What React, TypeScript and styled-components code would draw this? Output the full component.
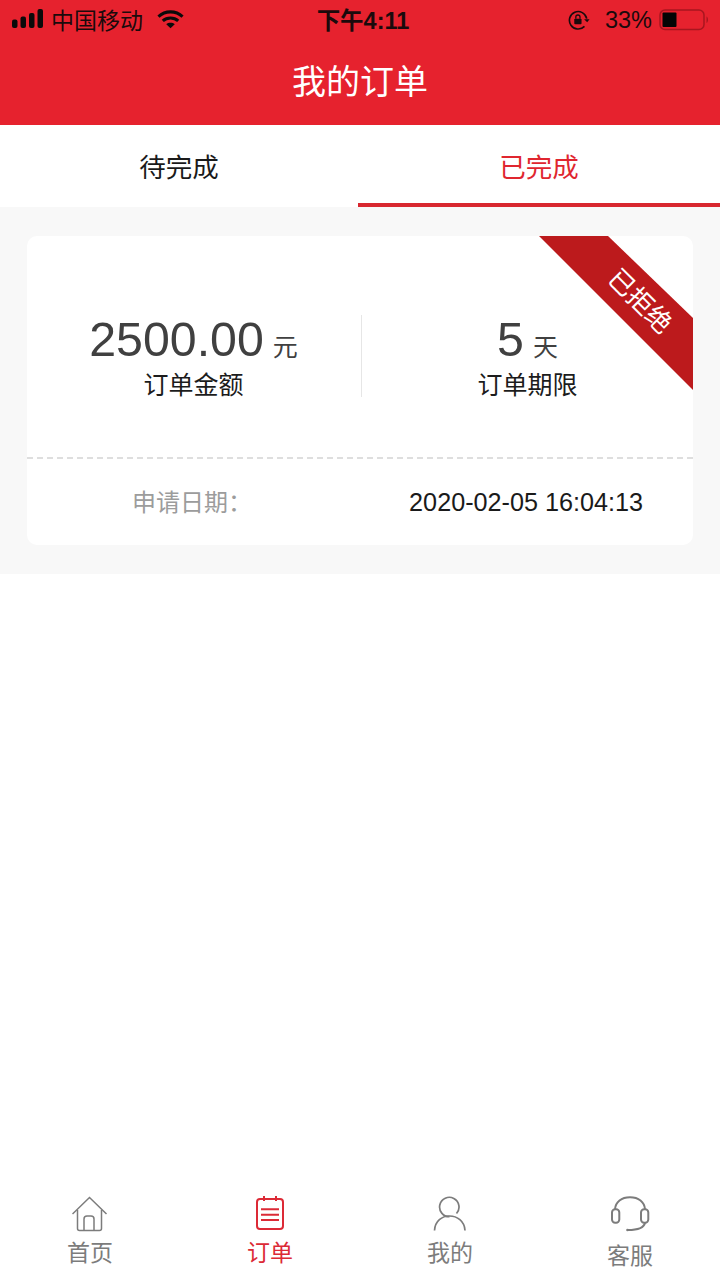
import React from "react";
import styled, { createGlobalStyle } from "styled-components";

const Global = createGlobalStyle`
  html, body { margin: 0; padding: 0; background: #fff; }
  body { font-family: "Liberation Sans", "Noto Sans CJK SC", sans-serif; }
  * { box-sizing: border-box; }
`;

const Page = styled.div`
  width: 720px; height: 1280px; display: flex; flex-direction: column; background: #fff; overflow: hidden;
`;
const Header = styled.header`
  height: 125px; background: #e6222e; display: flex; flex-direction: column; flex: none;
`;
const StatusBar = styled.div`
  height: 40px; display: grid; grid-template-columns: 1fr auto 1fr; align-items: center; padding: 0 11px 0 12px; color: #1a0a0c;
`;
const StatusLeft = styled.div`display: flex; align-items: center; gap: 8px; font-size: 23px; padding-bottom: 2px; svg:last-child { margin-left: 6px; }`;
const StatusTime = styled.div`font-size: 23.5px; font-weight: 700; margin-left: 5px; padding-bottom: 3px;`;
const StatusRight = styled.div`display: flex; align-items: center; justify-content: flex-end; gap: 7px; font-size: 23.5px; svg:first-child { margin-right: 8px; }`;
const Title = styled.h1`
  margin: 0; flex: 1; display: flex; align-items: center; justify-content: center; color: #fff;
  font-size: 34px; font-weight: 400; padding-bottom: 6px;
`;
const Tabs = styled.nav`height: 82px; display: grid; grid-template-columns: 358px 362px; background: #fff; flex: none;`;
const Tab = styled.div<{ $active?: boolean }>`
  display: flex; align-items: center; justify-content: center; font-size: 26.500px; padding-top: 3px;
  color: ${p => (p.$active ? "#e0262f" : "#1a1a1a")};
  border-bottom: 4px solid ${p => (p.$active ? "#d8272f" : "transparent")};
`;
const Content = styled.main`background: #f8f8f8; height: 367px; padding: 29px 27px; flex: none;`;
const Card = styled.section`
  position: relative; height: 309px; background: #fff; border-radius: 10px; overflow: hidden; display: flex; flex-direction: column;
`;
const Ribbon = styled.div`
  position: absolute; top: 0; right: 0; width: 154px; height: 154px; background: #bc1a1c;
  clip-path: polygon(0 0, 69px 0, 154px 82px, 154px 154px);
  display: flex; align-items: center; justify-content: center;
`;
const RibbonText = styled.span`
  color: #fff; font-size: 26px; transform: translate(26px, -14px) rotate(45deg); white-space: nowrap;
`;
const Stats = styled.div`
  height: 223px; display: grid; grid-template-columns: 334px 332px; align-content: center; padding-top: 18px;
  border-bottom: 2px dashed #dedede;
`;
const Stat = styled.div`
  height: 82px; display: flex; flex-direction: column; align-items: center; justify-content: flex-end;
  &:first-child { padding-right: 1px; }
  & + & { border-left: 1px solid #e6e6e6; }
`;
const Value = styled.div`color: #404040; font-size: 48.300px; line-height: 48px; white-space: nowrap;`;
const Unit = styled.span`font-size: 25px; margin-left: 9px;`;
const Label = styled.div`color: #1c1c1c; font-size: 25px; line-height: 30px; margin: -1px 0 -3px;`;
const DateRow = styled.div`flex: 1; display: flex; align-items: center; justify-content: space-between; padding: 0 50px 0 105px;`;
const DateLabel = styled.span`color: #9c9c9c; font-size: 24px; margin-top: -3px;`;
const DateValue = styled.span`color: #1a1a1a; font-size: 25.200px;`;
const Spacer = styled.div`flex: 1;`;
const TabBar = styled.footer`height: 108px; display: grid; grid-template-columns: repeat(4, 1fr); flex: none; background: #fff;`;
const BarItem = styled.div<{ $active?: boolean; $drop?: number }>`
  display: flex; flex-direction: column; align-items: center; padding-top: 24px;
  color: ${p => (p.$active ? "#dc2a36" : "#7c7c7c")};
  font-size: 23px;
  svg { display: block; }
  span { margin-top: ${p => p.$drop ?? 6}px; line-height: 30px; }
`;

const Signal = () => (
  <svg width="31" height="20" viewBox="0 0 31 20" fill="#0a0a0a">
    <rect x="0" y="10.500" width="5.500" height="8.500" rx="2" />
    <rect x="8.500" y="7.500" width="5.500" height="11.500" rx="2" />
    <rect x="17" y="4" width="5.500" height="15" rx="2" />
    <rect x="25.500" y="0" width="5.500" height="19" rx="2" />
  </svg>
);
const Wifi = () => (
  <svg width="27" height="20" viewBox="0 0 28 20" fill="none" stroke="#0a0a0a" strokeWidth="3.200">
    <path d="M1.500 7.500C8.500 1 19.500 1 26.500 7.500" />
    <path d="M6 12C10.500 8 17.500 8 22 12" />
    <path d="M14 19.500L9.600 15.400C12 13.400 16 13.400 18.400 15.400Z" fill="#0a0a0a" stroke="none" />
  </svg>
);
const RotationLock = () => (
  <svg width="22" height="20" viewBox="0 0 24 22" fill="none" stroke="#1a0a0c" strokeWidth="1.800">
    <path d="M20.500 9.500A9.600 9.600 0 1 0 18 18" />
    <path d="M17.600 10.200L21 13.600L23.600 10.200" fill="#1a0a0c" stroke="none" />
    <rect x="6.800" y="9.500" width="8" height="6.200" rx="1" fill="#1a0a0c" stroke="none" />
    <path d="M8.500 9.500V7.800a2.300 2.300 0 0 1 4.600 0V9.500" strokeWidth="1.400" />
  </svg>
);
const Battery = () => (
  <svg width="50" height="22" viewBox="0 0 50 22">
    <rect x="1" y="1" width="44" height="19.500" rx="5" fill="none" stroke="#a8161f" strokeWidth="1.500" />
    <rect x="3.500" y="3.500" width="14" height="14.500" rx="1" fill="#050505" />
    <path d="M47.500 7.500c2 .8 2 5.500 0 6.500z" fill="#a8161f" />
  </svg>
);
const HomeIcon = () => (
  <svg width="36" height="36" viewBox="0 0 36 36" fill="none" stroke="currentColor" strokeWidth="1.500">
    <path d="M0.500 18L17.500 1.500L34.500 18" />
    <path d="M5.500 14V32.500a2 2 0 0 0 2 2H27.500a2 2 0 0 0 2-2V14" />
    <path d="M12 34.500V23a3 3 0 0 1 3-3H19a3 3 0 0 1 3 3V34.500" />
  </svg>
);
const OrderIcon = () => (
  <svg width="30" height="36" viewBox="0 0 30 36" fill="none" stroke="currentColor" strokeWidth="2">
    <rect x="2" y="3" width="26" height="30" rx="3" />
    <path d="M9 0V5M21 0V5" />
    <path d="M6 13.300H24M6 18.700H24M6 24H24" />
  </svg>
);
const UserIcon = () => (
  <svg width="34" height="36" viewBox="0 0 34 36" fill="none" stroke="currentColor" strokeWidth="1.700">
    <path d="M23.500 17.500A9.700 9.700 0 1 0 16.500 20.700" />
    <path d="M1.500 34.500C2 25 9 20 16.500 20C24 20 31.500 25 32 34.500" />
  </svg>
);
const HeadsetIcon = () => (
  <svg width="40" height="36" viewBox="0 0 40 36" fill="none" stroke="currentColor" strokeWidth="2">
    <path d="M5 13.300C5.500 6 11.500 1.300 20 1.300C28.500 1.300 34.500 6 35 13.300" />
    <rect x="2" y="13.300" width="7.300" height="13.400" rx="3.200" />
    <rect x="31" y="13.300" width="7.300" height="13.400" rx="3.200" />
    <path d="M35 26.700C34 31.500 27 34 18 34" />
    <circle cx="17.500" cy="34" r="1.300" fill="currentColor" stroke="none" />
  </svg>
);

export default function App() {
  return (
    <Page>
      <Global />
      <Header>
        <StatusBar>
          <StatusLeft>
            <Signal />
            <span>中国移动</span>
            <Wifi />
          </StatusLeft>
          <StatusTime>下午4:11</StatusTime>
          <StatusRight>
            <RotationLock />
            <span>33%</span>
            <Battery />
          </StatusRight>
        </StatusBar>
        <Title>我的订单</Title>
      </Header>
      <Tabs>
        <Tab>待完成</Tab>
        <Tab $active>已完成</Tab>
      </Tabs>
      <Content>
        <Card>
          <Ribbon>
            <RibbonText>已拒绝</RibbonText>
          </Ribbon>
          <Stats>
            <Stat>
              <Value>2500.00<Unit>元</Unit></Value>
              <Label>订单金额</Label>
            </Stat>
            <Stat>
              <Value>5<Unit>天</Unit></Value>
              <Label>订单期限</Label>
            </Stat>
          </Stats>
          <DateRow>
            <DateLabel>申请日期：</DateLabel>
            <DateValue>2020-02-05 16:04:13</DateValue>
          </DateRow>
        </Card>
      </Content>
      <Spacer />
      <TabBar>
        <BarItem><HomeIcon /><span>首页</span></BarItem>
        <BarItem $active><OrderIcon /><span>订单</span></BarItem>
        <BarItem><UserIcon /><span>我的</span></BarItem>
        <BarItem $drop={9}><HeadsetIcon /><span>客服</span></BarItem>
      </TabBar>
    </Page>
  );
}
